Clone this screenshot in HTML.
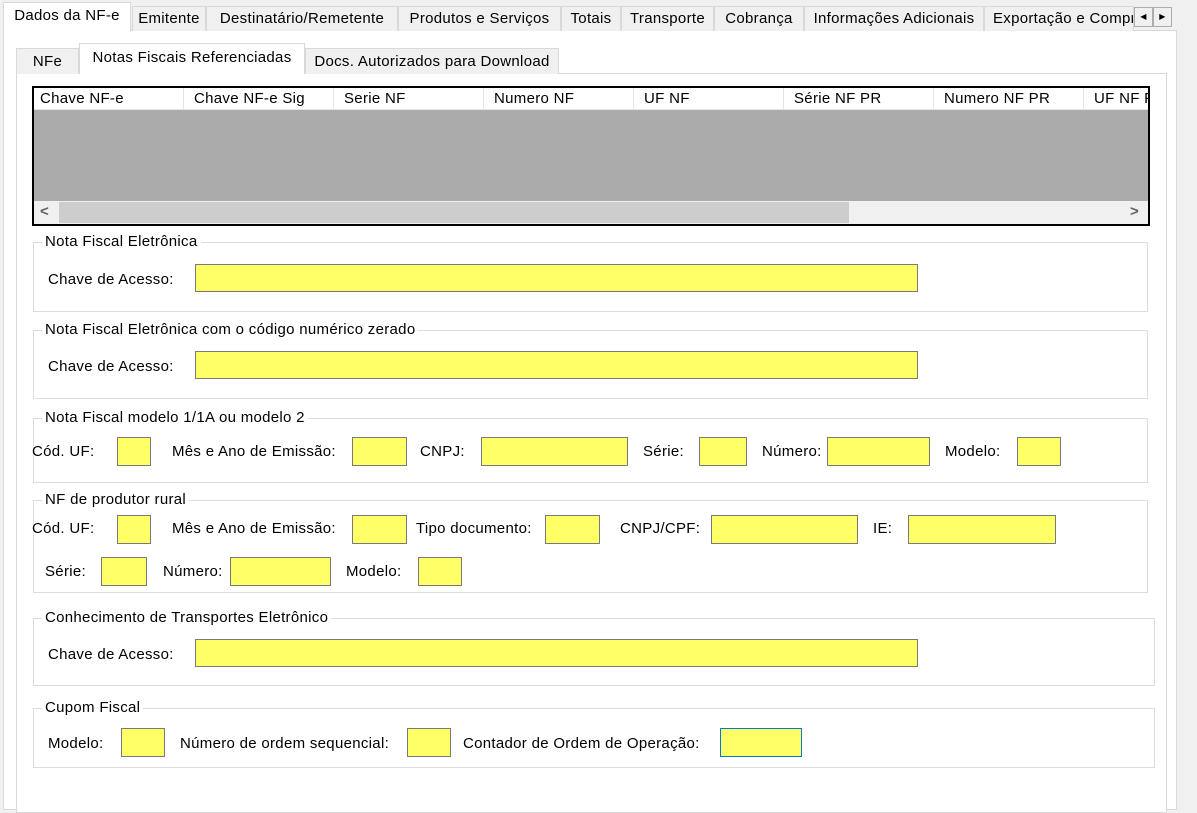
<!DOCTYPE html>
<html><head><meta charset="utf-8"><style>
*{box-sizing:border-box;margin:0;padding:0}
body{width:1197px;height:805px;background:#f0f0f0;font-family:"Liberation Sans",sans-serif;font-size:15px;letter-spacing:0.3px;color:#000;position:relative;overflow:hidden}
.a{position:absolute;white-space:nowrap}
.tab{position:absolute;top:6px;height:25px;border:1px solid #d9d9d9;border-bottom:none;background:#f0f0f0;line-height:23px;text-align:center;white-space:nowrap;overflow:hidden}
.in{position:absolute;background:#ffff66;border:1px solid #7a7a7a}
.g{position:absolute;border:1px solid #dcdcdc}
.gl{position:absolute;top:-10px;left:8px;background:#fff;padding:0 3px;line-height:18px;white-space:nowrap}
.l{position:absolute;line-height:18px;white-space:nowrap}
</style></head><body>
<div class="a" style="left:3px;top:30px;width:1174px;height:780px;background:#fff;border:1px solid #d9d9d9"></div>
<div class="tab" style="left:3px;top:2px;height:30px;width:128px;background:#fff;line-height:26px;z-index:2">Dados da NF-e</div>
<div class="tab" style="left:132px;width:74px">Emitente</div>
<div class="tab" style="left:206px;width:192px">Destinatário/Remetente</div>
<div class="tab" style="left:398px;width:163px">Produtos e Serviços</div>
<div class="tab" style="left:561px;width:60px">Totais</div>
<div class="tab" style="left:621px;width:93px">Transporte</div>
<div class="tab" style="left:714px;width:90px">Cobrança</div>
<div class="tab" style="left:804px;width:180px">Informações Adicionais</div>
<div class="tab" style="left:984px;width:150px;text-align:left;padding-left:8px">Exportação e Compra</div>
<div class="a" style="left:1134px;top:7px;width:19px;height:20px;border:1px solid #adadad;background:#f0f0f0;font-size:8px;text-align:center;line-height:18px">◀</div>
<div class="a" style="left:1153px;top:7px;width:19px;height:20px;border:1px solid #adadad;background:#f0f0f0;font-size:8px;text-align:center;line-height:18px">▶</div>

<div class="a" style="left:16px;top:73px;width:1151px;height:740px;background:#fff;border:1px solid #d9d9d9"></div>
<div class="tab" style="left:16px;top:48px;width:63px;height:26px;line-height:25px">NFe</div>
<div class="tab" style="left:79px;top:43px;width:226px;height:31px;background:#fff;line-height:28px;z-index:2">Notas Fiscais Referenciadas</div>
<div class="tab" style="left:305px;top:48px;width:254px;height:26px;line-height:25px">Docs. Autorizados para Download</div>

<div class="a" style="left:32px;top:86px;width:1118px;height:140px;border:2px solid #000;background:#ababab;overflow:hidden">
 <div class="a" style="left:0;top:0;width:1114px;height:22px;background:#fff;border-bottom:1px solid #e5e5e5"></div>
 <div class="l" style="left:6px;top:2px">Chave NF-e</div>
 <div class="a" style="left:149px;top:0;height:22px;border-left:1px solid #e5e5e5"></div>
 <div class="l" style="left:160px;top:2px">Chave NF-e Sig</div>
 <div class="a" style="left:299px;top:0;height:22px;border-left:1px solid #e5e5e5"></div>
 <div class="l" style="left:310px;top:2px">Serie NF</div>
 <div class="a" style="left:449px;top:0;height:22px;border-left:1px solid #e5e5e5"></div>
 <div class="l" style="left:460px;top:2px">Numero NF</div>
 <div class="a" style="left:599px;top:0;height:22px;border-left:1px solid #e5e5e5"></div>
 <div class="l" style="left:610px;top:2px">UF NF</div>
 <div class="a" style="left:749px;top:0;height:22px;border-left:1px solid #e5e5e5"></div>
 <div class="l" style="left:760px;top:2px">Série NF PR</div>
 <div class="a" style="left:899px;top:0;height:22px;border-left:1px solid #e5e5e5"></div>
 <div class="l" style="left:910px;top:2px">Numero NF PR</div>
 <div class="a" style="left:1049px;top:0;height:22px;border-left:1px solid #e5e5e5"></div>
 <div class="l" style="left:1060px;top:2px">UF NF PR</div>
 <div class="a" style="left:0;top:113px;width:1114px;height:23px;background:#f0f0f0"></div>
 <div class="a" style="left:25px;top:114px;width:790px;height:21px;background:#cdcdcd"></div>
 <div class="l" style="left:6px;top:115px;color:#606060;font-weight:bold">&lt;</div>
 <div class="l" style="left:1096px;top:115px;color:#606060;font-weight:bold">&gt;</div>
</div>

<div class="g" style="left:33px;top:242px;width:1115px;height:70px"><div class="gl">Nota Fiscal Eletrônica</div>
 <div class="l" style="left:14px;top:28px">Chave de Acesso:</div></div>
<div class="in" style="left:195px;top:264px;width:723px;height:28px"></div>

<div class="g" style="left:33px;top:330px;width:1115px;height:69px"><div class="gl">Nota Fiscal Eletrônica com o código numérico zerado</div>
 <div class="l" style="left:14px;top:27px">Chave de Acesso:</div></div>
<div class="in" style="left:195px;top:351px;width:723px;height:28px"></div>

<div class="g" style="left:33px;top:418px;width:1115px;height:65px"><div class="gl">Nota Fiscal modelo 1/1A ou modelo 2</div></div>
<div class="l" style="left:32px;top:443px">Cód. UF:</div><div class="in" style="left:117px;top:437px;width:34px;height:29px"></div>
<div class="l" style="left:172px;top:443px">Mês e Ano de Emissão:</div><div class="in" style="left:352px;top:437px;width:55px;height:29px"></div>
<div class="l" style="left:420px;top:443px">CNPJ:</div><div class="in" style="left:481px;top:437px;width:147px;height:29px"></div>
<div class="l" style="left:643px;top:443px">Série:</div><div class="in" style="left:699px;top:437px;width:48px;height:29px"></div>
<div class="l" style="left:762px;top:443px">Número:</div><div class="in" style="left:827px;top:437px;width:103px;height:29px"></div>
<div class="l" style="left:945px;top:443px">Modelo:</div><div class="in" style="left:1017px;top:437px;width:44px;height:29px"></div>

<div class="g" style="left:33px;top:500px;width:1115px;height:93px"><div class="gl">NF de produtor rural</div></div>
<div class="l" style="left:32px;top:520px">Cód. UF:</div><div class="in" style="left:117px;top:515px;width:34px;height:29px"></div>
<div class="l" style="left:172px;top:520px">Mês e Ano de Emissão:</div><div class="in" style="left:352px;top:515px;width:55px;height:29px"></div>
<div class="l" style="left:416px;top:520px">Tipo documento:</div><div class="in" style="left:545px;top:515px;width:55px;height:29px"></div>
<div class="l" style="left:620px;top:520px">CNPJ/CPF:</div><div class="in" style="left:711px;top:515px;width:147px;height:29px"></div>
<div class="l" style="left:873px;top:520px">IE:</div><div class="in" style="left:908px;top:515px;width:148px;height:29px"></div>
<div class="l" style="left:45px;top:563px">Série:</div><div class="in" style="left:101px;top:557px;width:46px;height:29px"></div>
<div class="l" style="left:163px;top:563px">Número:</div><div class="in" style="left:230px;top:557px;width:101px;height:29px"></div>
<div class="l" style="left:346px;top:563px">Modelo:</div><div class="in" style="left:418px;top:557px;width:44px;height:29px"></div>

<div class="g" style="left:33px;top:618px;width:1122px;height:68px"><div class="gl">Conhecimento de Transportes Eletrônico</div>
 <div class="l" style="left:14px;top:27px">Chave de Acesso:</div></div>
<div class="in" style="left:195px;top:639px;width:723px;height:28px"></div>

<div class="g" style="left:33px;top:708px;width:1122px;height:60px"><div class="gl">Cupom Fiscal</div></div>
<div class="l" style="left:48px;top:735px">Modelo:</div><div class="in" style="left:121px;top:728px;width:44px;height:29px"></div>
<div class="l" style="left:180px;top:735px">Número de ordem sequencial:</div><div class="in" style="left:407px;top:728px;width:44px;height:29px"></div>
<div class="l" style="left:463px;top:735px">Contador de Ordem de Operação:</div><div class="in" style="left:720px;top:728px;width:82px;height:29px;border-color:#0078d7"></div>
</body></html>
